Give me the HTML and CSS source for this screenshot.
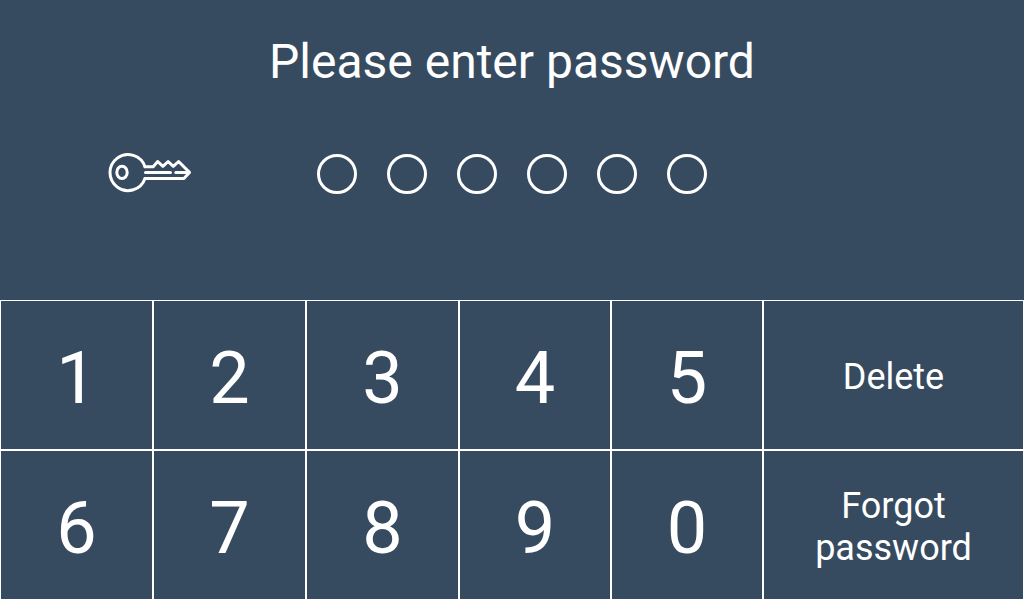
FILE: index.html
```html
<!DOCTYPE html>
<html lang="en">

<head>
    <meta charset="UTF-8">
    <meta name="viewport" content="width=device-width, initial-scale=1.0">
    <title>Password</title>
    <link rel="stylesheet" href="styles.css">
</head>

<body>
    <div class="header">
        <h1 class="title">Please enter password</h1>
        <div class="entry">
            <svg class="key" width="84" height="40" viewBox="108 153 84 40">
                <path d="M145 166.7h8.2l4.5-5.2 5.2 4.8 5.2-4.8 5.2 4.8 5.3-4.8 10.9 10.9-5.6 6.1H145" />
                <path d="M145 166.7a18 18 0 1 0 0 11.8" />
                <ellipse cx="122" cy="172.4" rx="5.2" ry="6.2" />
                <path d="M145.5 172.4h25M175.8 172.4h13" />
            </svg>
            <div class="dots">
                <span class="dot"></span>
                <span class="dot"></span>
                <span class="dot"></span>
                <span class="dot"></span>
                <span class="dot"></span>
                <span class="dot"></span>
            </div>
        </div>
    </div>
    <div class="keypad">
        <div class="cell">1</div>
        <div class="cell">2</div>
        <div class="cell">3</div>
        <div class="cell">4</div>
        <div class="cell">5</div>
        <div class="cell action">Delete</div>
        <div class="cell">6</div>
        <div class="cell">7</div>
        <div class="cell">8</div>
        <div class="cell">9</div>
        <div class="cell">0</div>
        <div class="cell action">Forgot<br>password</div>
    </div>
</body>

</html>
```
FILE: styles.css
```css
* {
    padding: 0;
    margin: 0;
    box-sizing: border-box;
}

body {
    width: 1024px;
    height: 600px;
    overflow: hidden;
    color: #fff;
    background-color: #374b60;
    font-family: Roboto, sans-serif;
}

.header {
    height: 300px;
    padding-top: 34px;
}

.title {
    font-size: 48px;
    font-weight: 400;
    line-height: 56px;
    text-align: center;
}

.entry {
    display: flex;
    padding: 63px 0 0 108px;
}

.key {
    fill: none;
    stroke: #fff;
    stroke-width: 3;
    stroke-linejoin: round;
    stroke-linecap: round;
}

.dots {
    display: flex;
    gap: 30px;
    margin: 1px 0 0 125px;
}

.dot {
    width: 40px;
    height: 40px;
    border: 3px solid #fff;
    border-radius: 50%;
}

.keypad {
    display: grid;
    grid-template-columns: 153px 153px 153px 152px 152px 261px;
    grid-template-rows: 150px 150px;
}

.cell {
    display: flex;
    align-items: center;
    justify-content: center;
    padding-top: 6px;
    border: 1px solid #fff;
    font-size: 72px;
    text-align: center;
}

.action {
    padding-top: 4px;
    font-size: 36px;
    line-height: 42px;
}
```
